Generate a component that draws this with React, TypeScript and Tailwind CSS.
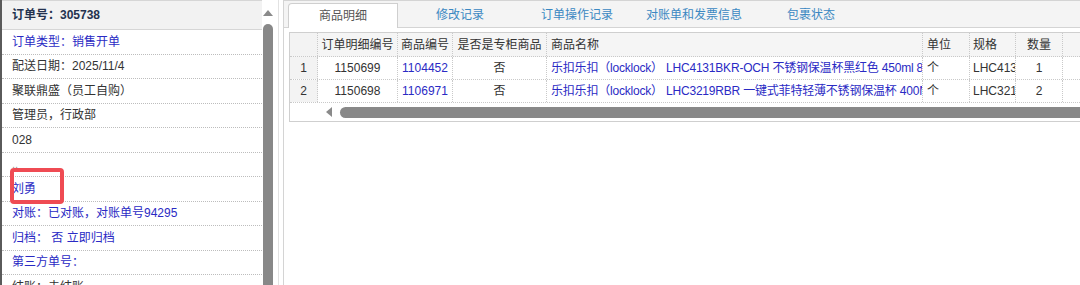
import React from "react";

const INFO: { text: string; tone?: "blue" | "faint" }[] = [
  { text: "订单类型：销售开单", tone: "blue" },
  { text: "配送日期：2025/11/4" },
  { text: "聚联鼎盛（员工自购）" },
  { text: "管理员，行政部" },
  { text: "028" },
  { text: "..", tone: "faint" },
  { text: "刘勇", tone: "blue" },
  { text: "对账：已对账，对账单号94295", tone: "blue" },
  { text: "归档：  否 立即归档", tone: "blue" },
  { text: "第三方单号：", tone: "blue" },
  { text: "结账：未结账" },
];

const TABS = ["商品明细", "修改记录", "订单操作记录", "对账单和发票信息", "包裹状态"];

const GRID = "grid grid-cols-[28px_80px_55px_94px_376px_47px_46px_47px_80px]";

const HEAD = [
  { label: "", cls: "justify-center bg-[#f3f3f3]" },
  { label: "订单明细编号", cls: "justify-center" },
  { label: "商品编号", cls: "justify-center" },
  { label: "是否是专柜商品", cls: "justify-center" },
  { label: "商品名称", cls: "justify-start pl-[4px]" },
  { label: "单位", cls: "justify-start pl-[4px]" },
  { label: "规格", cls: "justify-start pl-[3px]" },
  { label: "数量", cls: "justify-center" },
  { label: "", cls: "" },
];

const ROWS = [
  {
    no: "1",
    detailId: "1150699",
    sku: "1104452",
    counter: "否",
    name: "乐扣乐扣（locklock） LHC4131BKR-OCH 不锈钢保温杯黑红色 450ml 8个装",
    unit: "个",
    spec: "LHC4131BKR",
    qty: "1",
  },
  {
    no: "2",
    detailId: "1150698",
    sku: "1106971",
    counter: "否",
    name: "乐扣乐扣（locklock） LHC3219RBR 一键式菲特轻薄不锈钢保温杯 400ML；红色",
    unit: "个",
    spec: "LHC3219RBR",
    qty: "2",
  },
];

const cell = "flex items-center overflow-hidden whitespace-nowrap border-r border-dotted border-[#c9c9c9]";

export default function App() {
  return (
    <div className="flex h-[285px] w-[1080px] overflow-hidden bg-white font-['Liberation_Sans','Noto_Sans_CJK_SC',sans-serif] text-[12px] text-[#333]">
      {/* order info panel */}
      <aside className="relative flex w-[274px] shrink-0 border-l-2 border-[#5a5a5a]">
        <div className="flex w-[260px] flex-col">
          <div className="flex h-[30px] shrink-0 items-center border-t border-b border-[#d6d6d6] bg-[#f2f2f2] pl-[10px] font-bold text-[#24324f]">
            订单号：305738
          </div>
          {INFO.map((row, i) => (
            <div
              key={i}
              className={
                "flex h-[24.5px] shrink-0 items-center border-b border-dotted border-[#bdbdbd] pl-[10px] " +
                (row.tone === "blue"
                  ? "text-[#2a2ac4]"
                  : row.tone === "faint"
                    ? "text-[11px] leading-none text-[#999]"
                    : "text-[#333]")
              }
            >
              {row.text}
            </div>
          ))}
        </div>

        {/* vertical scrollbar */}
        <div className="flex w-[12px] flex-col items-center">
          <div className="mt-[10px] h-0 w-0 border-x-[5px] border-b-[6px] border-x-transparent border-b-[#8a8a8a]" />
          <div className="mt-[8px] w-[10px] flex-1 rounded-t-[5px] bg-[#888]" />
        </div>

        <div className="absolute left-[8px] top-[168px] h-[36px] w-[54px] rounded-[4px] border-4 border-[#ef4b53]" />
      </aside>

      <div className="flex w-[9px] shrink-0">
        <div className="ml-[4px] h-full w-px bg-[#e2e2e2]" />
      </div>

      {/* detail panel */}
      <main className="flex min-w-0 flex-1 flex-col border-l border-[#d4d4d4]">
        <div className="flex h-[28px] shrink-0 items-end gap-[7px] border-t border-b border-[#d4d4d4] bg-[#f4f4f4] pl-[4px]">
          {TABS.map((tab, i) =>
            i === 0 ? (
              <div
                key={tab}
                className="-mb-px flex h-[25px] w-[110px] items-center justify-center rounded-tl-[4px] border border-b-0 border-[#cfcfcf] bg-white text-[#555]"
              >
                {tab}
              </div>
            ) : (
              <div key={tab} className="flex h-[24px] w-[110px] items-center justify-center text-[#3b88c2]">
                {tab}
              </div>
            )
          )}
        </div>

        <div className="ml-[5px] mt-[4px] flex flex-col overflow-hidden border-t border-b border-l border-[#cfcfcf]">
          <div className={GRID + " h-[24px] border-b border-dotted border-[#c9c9c9] bg-[#f5f5f5]"}>
            {HEAD.map((h, i) => (
              <div key={i} className={cell + " " + h.cls}>
                {h.label}
              </div>
            ))}
          </div>

          {ROWS.map((r) => (
            <div key={r.no} className={GRID + " h-[23px] border-b border-dotted border-[#c9c9c9]"}>
              <div className={cell + " justify-center bg-[#f3f3f3]"}>{r.no}</div>
              <div className={cell + " justify-center"}>{r.detailId}</div>
              <div className={cell + " justify-center text-[#2a2ac4]"}>{r.sku}</div>
              <div className={cell + " justify-center"}>{r.counter}</div>
              <div className={cell + " pl-[4px] tracking-[-0.2px] text-[#2a2ac4]"}>{r.name}</div>
              <div className={cell + " pl-[4px]"}>{r.unit}</div>
              <div className={cell + " pl-[3px]"}>{r.spec}</div>
              <div className={cell + " justify-center"}>{r.qty}</div>
              <div className={cell} />
            </div>
          ))}

          {/* horizontal scrollbar */}
          <div className="flex h-[18px] items-center">
            <div className="h-full w-[28px] shrink-0" />
            <div className="ml-[8px] h-0 w-0 border-y-[5px] border-r-[6px] border-y-transparent border-r-[#8a8a8a]" />
            <div className="ml-[8px] h-[11px] flex-1 rounded-l-full bg-[#888]" />
          </div>
        </div>
      </main>
    </div>
  );
}
